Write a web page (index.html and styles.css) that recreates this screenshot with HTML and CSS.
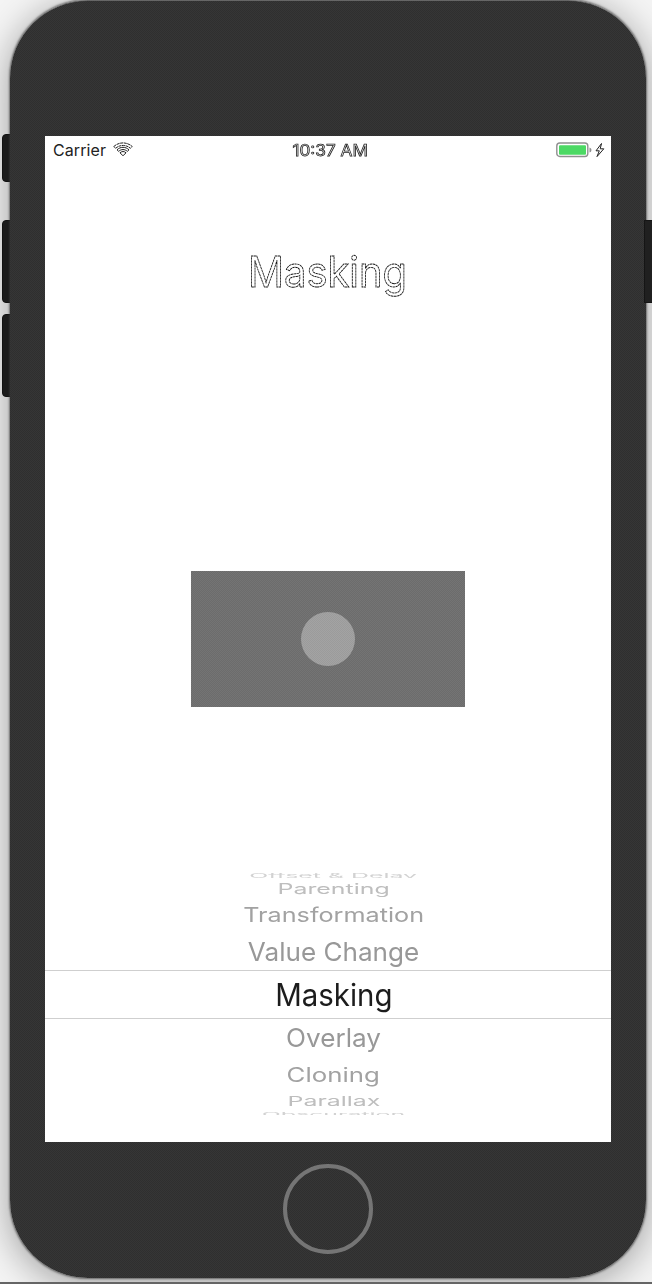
FILE: index.html
```html
<!DOCTYPE html>
<html lang="en">
<head>
<meta charset="utf-8">
<title>Masking</title>
<link rel="stylesheet" href="styles.css">
</head>
<body>
<div class="stage">
  <i class="side-button mute"></i>
  <i class="side-button volume-up"></i>
  <i class="side-button volume-down"></i>
  <div class="phone">
    <main class="screen">
      <header class="status">
        <div class="carrier"><span class="carrier-name">Carrier</span>
          <svg class="wifi" width="20" height="16" viewBox="0 0 20 16" fill="none" stroke="#222" stroke-width="1"><path d="M.8 4.5C6-.3 14-.3 19.200 4.500L17.500 6.300C13 2.500 7 2.500 2.500 6.300Z" stroke-dasharray="3 .6"/><path d="M4 7.800C7.500 4.500 12.500 4.500 16 7.800L14.400 9.300C11.500 7 8.500 7 5.600 9.300Z"/><path d="M7 10.800C8.700 9.100 11.300 9.100 13 10.800L10 13.800Z"/></svg>
        </div>
        <svg class="clock" width="80" height="20" viewBox="0 0 80 20"><text class="clock-text" x="2.500" y="15.500" textLength="75.500" lengthAdjust="spacingAndGlyphs">10:37 AM</text></svg>
        <div class="power">
          <svg width="50" height="16" viewBox="0 0 50 16"><rect x=".8" y="1" width="31" height="13.500" rx="3" fill="#fff" stroke="#909090" stroke-width="1.400"/><rect x="3" y="3.200" width="27" height="9.600" rx="1" fill="#4cd964"/><path d="M33.500 5.500q2 .5 2 2.500t-2 2.500z" fill="#909090"/><path d="M45.500 1.500L40 8.800h3.300L41 14.600l6.800-7.800h-3.600z" fill="#fff" stroke="#222" stroke-width="1"/></svg>
        </div>
      </header>
      <h1 class="title"><svg width="170" height="64" viewBox="0 0 170 64"><text class="title-text" x="5" y="42.500" textLength="159" lengthAdjust="spacingAndGlyphs">Masking</text></svg></h1>
      <section class="demo"><div class="dot"></div></section>
      <ul class="picker">
        <li class="row edge top"><span class="label offset">Offset &amp; Delay</span></li>
        <li class="row far"><span class="label parenting">Parenting</span></li>
        <li class="row mid upper"><span class="label transformation">Transformation</span></li>
        <li class="row near"><span class="label value">Value Change</span></li>
        <li class="row selected"><span class="label masking">Masking</span></li>
        <li class="row near"><span class="label overlay">Overlay</span></li>
        <li class="row mid lower"><span class="label cloning">Cloning</span></li>
        <li class="row far"><span class="label parallax">Parallax</span></li>
        <li class="row edge bottom"><span class="label obscuration">Obscuration</span></li>
      </ul>
    </main>
    <div class="home"></div>
  </div>
  <i class="side-button power-key"></i>
</div>
</body>
</html>
```
FILE: styles.css
```css
* { box-sizing: border-box; }
body { margin: 0; font-family: Inter, Roboto, "Liberation Sans", sans-serif; background: #f4f4f4; }
.stage { position: relative; height: 1284px; padding: 0 6px 0 10px; overflow: hidden; border-bottom: 2px solid #656565; }
.phone {
  position: relative; height: 1278px; padding: 135px 35px 0; border-radius: 78px;
  background: repeating-conic-gradient(#2f2f2f 0 25%, #363636 0 50%) 0 0 / 2px 2px;
  border-top: 1px solid #666;
  box-shadow: 0 0 2px 1px rgba(60,60,60,.65), 0 6px 34px 4px rgba(0,0,0,.3);
}
.side-button { position: absolute; left: 2px; width: 9px; background: #202020; border: 1px solid #151515; border-radius: 4px 0 0 4px; }
.mute { top: 134px; height: 48px; }
.volume-up { top: 220px; height: 83px; }
.volume-down { top: 314px; height: 83px; }
.power-key { left: 644px; top: 220px; width: 9px; height: 83px; border-radius: 0; }
.screen { display: flex; flex-direction: column; height: 1006px; width: 566px; background: #fff; }
.status { display: grid; grid-template-columns: 1fr 80px 1fr; height: 28px; align-items: center; padding: 0 5px 0 8px; }
.carrier { display: flex; align-items: center; gap: 7px; font-size: 16px; color: #222; }
.carrier-name { letter-spacing: .1px; }
.clock { display: block; will-change: transform; }
.clock-text { font-size: 15.5px; font-weight: 400; fill: #fff; stroke: #222; stroke-width: .75; }
.power { display: flex; justify-content: flex-end; }
.title { margin: 80px 0 0; display: flex; justify-content: center; height: 64px; will-change: transform; }
.title-text { font-size: 42.5px; font-weight: 400; fill: #fff; stroke: #111; stroke-width: .9; stroke-dasharray: 2.500 .5; }
.demo {
  width: 274px; height: 136px; margin: 263px auto 0; display: grid; place-items: center;
  background: repeating-conic-gradient(#6c6c6c 0 25%, #747474 0 50%) 0 0 / 2px 2px;
}
.dot { width: 54px; height: 54px; border-radius: 50%; background: repeating-conic-gradient(#9b9b9b 0 25%, #a3a3a3 0 50%) 0 0 / 2px 2px; }
.picker { list-style: none; margin: 166px 0 0; padding: 0; font-size: 30px; line-height: 36px; will-change: transform; }
.row { display: flex; align-items: center; justify-content: center; padding-left: 11px; white-space: nowrap; }
.label { display: block; flex: none; }
.edge { height: 5px; overflow: hidden; color: #d2d2d2; }
.far { height: 22px; color: #bebebe; }
.mid { height: 30px; color: #a2a2a2; }
.near { height: 38px; color: #989898; }
.upper { margin-bottom: 2px; }
.lower { margin-top: 3px; }
.bottom { height: 4px; margin-top: -1px; }
.selected { height: 49px; color: #1c1c1c; border: solid #cfcfcf; border-width: 1px 0; }
.offset { transform: scale(.83, .2); }
.parenting { transform: scale(.83, .48); }
.transformation { transform: scale(.84, .67); }
.value { transform: translateY(.5px) scale(.87, .86); }
.masking { transform: scale(.98, 1.02); }
.overlay { transform: translateY(-.5px) scale(.87, .86); }
.cloning { transform: scale(.86, .67); }
.parallax { transform: scale(.83, .45); }
.obscuration { transform: translateY(1px) scale(.83, .18); }
.home { width: 90px; height: 90px; margin: 22px auto 0; border: 4px solid #757575; border-radius: 50%; }
```
